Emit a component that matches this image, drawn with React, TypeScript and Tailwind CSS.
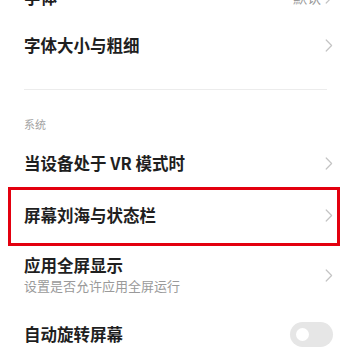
import React from 'react';

const font = { fontFamily: '"Noto Sans CJK SC", "Noto Sans", sans-serif' };

const Chevron = () => (
  <svg width="8" height="13" viewBox="0 0 8 13" fill="none" className="shrink-0">
    <path d="M1.2 1l5.4 5.5-5.4 5.5" stroke="#c4c4c4" strokeWidth="1.2" strokeLinecap="round" strokeLinejoin="round" />
  </svg>
);

const Title = ({ children }: { children: React.ReactNode }) => (
  <span className="text-[16.5px] font-semibold text-[#1f1f1f] leading-[21px]">{children}</span>
);

const Row = ({ title, h, right }: { title: string; h: string; right?: React.ReactNode }) => (
  <div className={`flex items-center justify-between pl-6 pr-[18px] ${h}`}>
    <Title>{title}</Title>
    {right ?? <Chevron />}
  </div>
);

export default function App() {
  return (
    <div className="w-[351px] h-[349px] overflow-hidden bg-white" style={font}>
      <div className="-mt-[23px] flex flex-col">
        <Row
          title="字体"
          h="h-[40px]"
          right={
            <div className="flex items-center gap-1">
              <span className="text-[14px] text-[#999]">默认</span>
              <Chevron />
            </div>
          }
        />
        <Row title="字体大小与粗细" h="h-[57px]" />
        <div className="h-[15px]" />
        <div className="mx-6 border-t border-[#ececec]" />
        <div className="h-[49px] flex items-end pb-[8px] pl-6">
          <span className="text-[11px] leading-[14px] text-[#a3a3a3]">系统</span>
        </div>
        <Row title="当设备处于 VR 模式时" h="h-[48px]" />
        <div className="ml-2 mr-[11px] h-[59px] border-[3px] border-[#e3000f] flex items-center justify-between pl-[13px] pr-[4px] pb-[3px]">
          <Title>屏幕刘海与状态栏</Title>
          <Chevron />
        </div>
        <div className="h-[58px] flex items-center justify-between pl-6 pr-[18px]">
          <div className="flex flex-col">
            <Title>应用全屏显示</Title>
            <span className="text-[13px] text-[#9a9a9a] leading-[20px]">设置是否允许应用全屏运行</span>
          </div>
          <Chevron />
        </div>
        <Row
          title="自动旋转屏幕"
          h="h-[61px]"
          right={
            <div className="w-[43px] h-[25px] rounded-full bg-[#e6e6e6] flex items-center pl-[6px]">
              <div className="w-[13px] h-[13px] rounded-full bg-white" />
            </div>
          }
        />
      </div>
    </div>
  );
}
